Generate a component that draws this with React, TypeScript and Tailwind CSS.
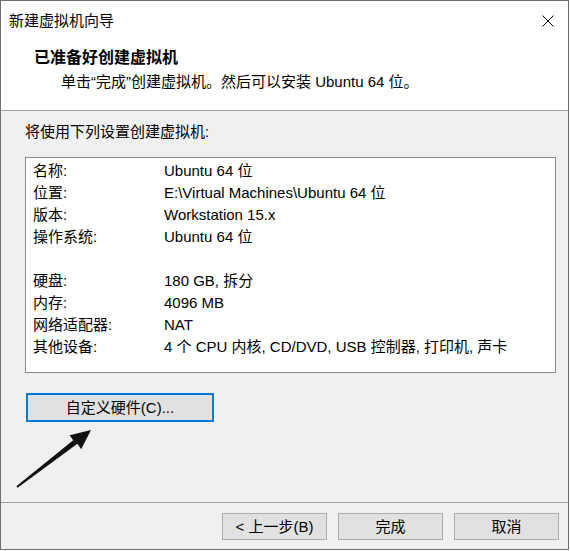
import React from "react";

const rows: [string, string][] = [
  ["名称:", "Ubuntu 64 位"],
  ["位置:", "E:\\Virtual Machines\\Ubuntu 64 位"],
  ["版本:", "Workstation 15.x"],
  ["操作系统:", "Ubuntu 64 位"],
  ["", ""],
  ["硬盘:", "180 GB, 拆分"],
  ["内存:", "4096 MB"],
  ["网络适配器:", "NAT"],
  ["其他设备:", "4 个 CPU 内核, CD/DVD, USB 控制器, 打印机, 声卡"],
];

function CloseIcon() {
  return (
    <svg width="12" height="12" viewBox="0 0 12 12" className="block">
      <path d="M0.5 0.5 L11.5 11.5 M11.5 0.5 L0.5 11.5" stroke="#000" strokeWidth="1" fill="none" />
    </svg>
  );
}

export default function App() {
  return (
    <div className="relative w-[570px] h-[551px] bg-white font-['Liberation_Sans','Noto_Sans_CJK_SC',sans-serif] text-[15px] text-black">
      <div className="w-[569px] h-[550px] border border-[#6f6f6f] bg-[#f0f0f0] flex flex-col">
        {/* 标题栏 + 说明 */}
        <div className="bg-white h-[110px] border-b border-[#a0a0a0] flex flex-col">
          <div className="h-[39px] flex items-center justify-between pl-[8px] pr-[14px]">
            <span className="leading-[20px]">新建虚拟机向导</span>
            <CloseIcon />
          </div>
          <div className="pl-[33px] mt-[7px] leading-[22px] font-bold text-[16px]">已准备好创建虚拟机</div>
          <div className="pl-[60px] mt-[2px] leading-[22px]">
            单击“完成”创建虚拟机。然后可以安装 Ubuntu 64 位。
          </div>
        </div>

        {/* 设置列表 */}
        <div className="flex-1 pl-[24px] pr-[12px]">
          <div className="mt-[10px] h-[22px] leading-[22px]">将使用下列设置创建虚拟机:</div>
          <div className="mt-[14px] h-[216px] bg-white border border-[#8a8a8a] pt-[2px] pl-[7px]">
            {rows.map(([k, v], i) => (
              <div key={i} className="h-[22px] leading-[22px] flex">
                <span className="w-[131px] shrink-0">{k}</span>
                <span>{v}</span>
              </div>
            ))}
          </div>
          <button className="mt-[20px] ml-[1px] w-[188px] h-[29px] bg-[#e1e1e1] border-2 border-[#0078d7] leading-[22px]">
            自定义硬件(C)...
          </button>
        </div>

        {/* 底部按钮 */}
        <div className="h-[47px] border-t border-[#a0a0a0] flex justify-end gap-[11px] pt-[10px] pr-[9px]">
          {["< 上一步(B)", "完成", "取消"].map((t) => (
            <button key={t} className="w-[105px] h-[27px] bg-[#e1e1e1] border border-[#adadad] leading-[22px]">
              {t}
            </button>
          ))}
        </div>
      </div>

      {/* 指示箭头 */}
      <svg className="absolute left-0 top-0 pointer-events-none" width="570" height="551">
        <polygon
          points="16.4,486.2 73.2,440.2 69.6,435.2 91,430 81.2,449.2 77.4,443.8 17.6,487.8"
          fill="#111"
        />
      </svg>
    </div>
  );
}
